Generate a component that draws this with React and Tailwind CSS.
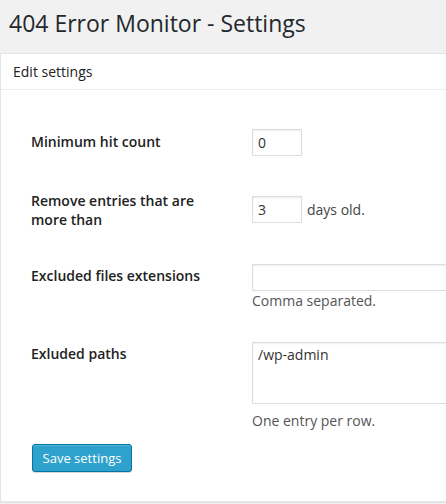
import React from "react";

const fieldClass =
  "block border border-[#dddddd] bg-white px-[5px] text-[14px] text-[#333333] shadow-[inset_0_1px_2px_rgba(0,0,0,0.07)] outline-none font-['Open_Sans',sans-serif]";

const Label = ({ children, className = "" }) => (
  <div className={`w-[221px] shrink-0 text-[14px] font-semibold text-[#222222] ${className}`}>
    {children}
  </div>
);

export default function App() {
  return (
    <div className="h-[504px] w-[446px] overflow-hidden bg-[#f1f1f1] font-['Open_Sans',sans-serif] text-[#444444]">
      <h2 className="whitespace-nowrap pl-[9px] pt-[9px] text-[23px] font-normal leading-[29px] text-[#23282d]">
        404 Error Monitor - Settings
      </h2>

      <div className="mt-[15px] w-[640px] border border-[#e5e5e5] bg-white shadow-[0_1px_1px_rgba(0,0,0,0.04)]">
        {/* Header */}
        <div className="border-b border-[#eeeeee] px-[12px] py-[8px] text-[14px] leading-[19px] text-[#222222]">
          Edit settings
        </div>

        {/* Form */}
        <div className="pb-[29px] pl-[30px] pt-[39px]">
          <div className="flex items-start">
            <Label className="mt-[4px] leading-[18px]">Minimum hit count</Label>
            <input className={`${fieldClass} h-[27px] w-[50px]`} defaultValue="0" />
          </div>

          <div className="mt-[35px] flex items-start">
            <Label className="leading-[19px]">
              Remove entries that are
              <br />
              more than
            </Label>
            <div className="mt-[5px] flex items-center">
              <input className={`${fieldClass} h-[27px] w-[50px]`} defaultValue="3" />
              <span className="ml-[5px] text-[14px] leading-[27px] text-[#444444]">days old.</span>
            </div>
          </div>

          <div className="mt-[35px] flex items-start">
            <Label className="mt-[3px] leading-[18px]">Excluded files extensions</Label>
            <div>
              <input className={`${fieldClass} h-[27px] w-[350px]`} defaultValue="" />
              <p className="mt-[1px] text-[14px] leading-[18px] text-[#555555]">Comma separated.</p>
            </div>
          </div>

          <div className="mt-[32px] flex items-start">
            <Label className="mt-[3px] leading-[18px]">Exluded paths</Label>
            <div>
              <textarea
                className={`${fieldClass} h-[62px] w-[350px] resize-none pt-[3px] leading-[18px]`}
                defaultValue="/wp-admin"
              />
              <p className="mt-[8px] text-[14px] leading-[18px] text-[#555555]">One entry per row.</p>
            </div>
          </div>

          <button className="mt-[14px] ml-[1px] block h-[28px] w-[100px] rounded-[3px] border border-[#0074a2] bg-[#2ea2cc] pb-[1px] text-[13px] leading-[26px] text-white shadow-[inset_0_1px_0_rgba(120,200,230,0.5),0_1px_0_rgba(0,0,0,0.15)]">
            Save settings
          </button>
        </div>
      </div>
    </div>
  );
}
